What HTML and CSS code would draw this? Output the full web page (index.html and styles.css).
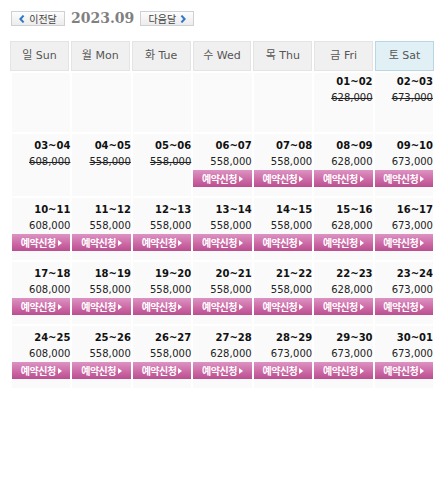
FILE: index.html
```html
<!DOCTYPE html>
<html lang="ko">
<head>
<meta charset="utf-8">
<title>2023.09</title>
<link rel="stylesheet" href="styles.css">
</head>
<body>
<div class="cal">
  <div class="nav">
    <a class="navbtn prev"><svg class="chev" viewBox="0 0 6 8" width="6" height="8"><path d="M4.6 0.6 L1.4 4 L4.6 7.4" fill="none" stroke="#2f78c4" stroke-width="2"/></svg><span>이전달</span></a>
    <span class="title">2023.09</span>
    <a class="navbtn next"><span>다음달</span><svg class="chev" viewBox="0 0 6 8" width="6" height="8"><path d="M1.4 0.6 L4.6 4 L1.4 7.4" fill="none" stroke="#2f78c4" stroke-width="2"/></svg></a>
  </div>
  <div class="week">
    <div class="wd">일 Sun</div>
    <div class="wd">월 Mon</div>
    <div class="wd">화 Tue</div>
    <div class="wd">수 Wed</div>
    <div class="wd">목 Thu</div>
    <div class="wd">금 Fri</div>
    <div class="wd sat">토 Sat</div>
  </div>
  <div class="days">
    <div class="day r1"></div>
    <div class="day r1"></div>
    <div class="day r1"></div>
    <div class="day r1"></div>
    <div class="day r1"></div>
    <div class="day r1"><div class="d">01~02</div><div class="p past">628,000</div></div>
    <div class="day r1"><div class="d">02~03</div><div class="p past">673,000</div></div>

    <div class="day"><div class="d">03~04</div><div class="p past">608,000</div></div>
    <div class="day"><div class="d">04~05</div><div class="p past">558,000</div></div>
    <div class="day"><div class="d">05~06</div><div class="p past">558,000</div></div>
    <div class="day"><div class="d">06~07</div><div class="p">558,000</div><a class="book">예약신청<i></i></a></div>
    <div class="day"><div class="d">07~08</div><div class="p">558,000</div><a class="book">예약신청<i></i></a></div>
    <div class="day"><div class="d">08~09</div><div class="p">628,000</div><a class="book">예약신청<i></i></a></div>
    <div class="day"><div class="d">09~10</div><div class="p">673,000</div><a class="book">예약신청<i></i></a></div>

    <div class="day"><div class="d">10~11</div><div class="p">608,000</div><a class="book">예약신청<i></i></a></div>
    <div class="day"><div class="d">11~12</div><div class="p">558,000</div><a class="book">예약신청<i></i></a></div>
    <div class="day"><div class="d">12~13</div><div class="p">558,000</div><a class="book">예약신청<i></i></a></div>
    <div class="day"><div class="d">13~14</div><div class="p">558,000</div><a class="book">예약신청<i></i></a></div>
    <div class="day"><div class="d">14~15</div><div class="p">558,000</div><a class="book">예약신청<i></i></a></div>
    <div class="day"><div class="d">15~16</div><div class="p">628,000</div><a class="book">예약신청<i></i></a></div>
    <div class="day"><div class="d">16~17</div><div class="p">673,000</div><a class="book">예약신청<i></i></a></div>

    <div class="day"><div class="d">17~18</div><div class="p">608,000</div><a class="book">예약신청<i></i></a></div>
    <div class="day"><div class="d">18~19</div><div class="p">558,000</div><a class="book">예약신청<i></i></a></div>
    <div class="day"><div class="d">19~20</div><div class="p">558,000</div><a class="book">예약신청<i></i></a></div>
    <div class="day"><div class="d">20~21</div><div class="p">558,000</div><a class="book">예약신청<i></i></a></div>
    <div class="day"><div class="d">21~22</div><div class="p">558,000</div><a class="book">예약신청<i></i></a></div>
    <div class="day"><div class="d">22~23</div><div class="p">628,000</div><a class="book">예약신청<i></i></a></div>
    <div class="day"><div class="d">23~24</div><div class="p">673,000</div><a class="book">예약신청<i></i></a></div>

    <div class="day"><div class="d">24~25</div><div class="p">608,000</div><a class="book">예약신청<i></i></a></div>
    <div class="day"><div class="d">25~26</div><div class="p">558,000</div><a class="book">예약신청<i></i></a></div>
    <div class="day"><div class="d">26~27</div><div class="p">558,000</div><a class="book">예약신청<i></i></a></div>
    <div class="day"><div class="d">27~28</div><div class="p">628,000</div><a class="book">예약신청<i></i></a></div>
    <div class="day"><div class="d">28~29</div><div class="p">673,000</div><a class="book">예약신청<i></i></a></div>
    <div class="day"><div class="d">29~30</div><div class="p">673,000</div><a class="book">예약신청<i></i></a></div>
    <div class="day"><div class="d">30~01</div><div class="p">673,000</div><a class="book">예약신청<i></i></a></div>
  </div>
</div>
</body>
</html>
```
FILE: styles.css
```css
html, body {
  margin: 0;
  padding: 0;
  background: #fff;
}
.cal {
  font-family: "DejaVu Sans", "Noto Sans CJK KR", sans-serif;
  width: 441px;
}
.nav {
  display: flex;
  align-items: center;
  height: 15px;
  margin-top: 11px;
  padding-left: 11px;
}
.navbtn {
  box-sizing: border-box;
  display: flex;
  align-items: center;
  justify-content: center;
  gap: 4px;
  width: 54px;
  height: 15px;
  border: 1px solid #cdd1d5;
  background: linear-gradient(#fdfdfd, #ececec);
  font-family: "Noto Sans CJK KR", sans-serif;
  font-size: 10px;
  line-height: 13px;
  color: #444;
}
.title {
  font-family: "DejaVu Serif", serif;
  font-weight: bold;
  font-size: 14px;
  color: #808080;
  margin: 0 6px;
  line-height: 15px;
}
.week {
  display: grid;
  grid-template-columns: repeat(7, 1fr);
  gap: 2px;
  margin: 15px 0 0 10px;
  width: 424px;
}
.wd {
  box-sizing: border-box;
  height: 30px;
  border: 1px solid #e4e4e4;
  background: #f0f0f0;
  text-align: center;
  font-size: 11px;
  line-height: 28px;
  color: #555;
}
.wd.sat {
  background: #e0f0f5;
  border-color: #b8d6e4;
}
.days {
  display: grid;
  grid-template-columns: repeat(7, 1fr);
  grid-auto-rows: 62px;
  grid-template-rows: 59px;
  gap: 2px;
  margin: 2px 0 0 12px;
  width: 421px;
}
.day {
  box-sizing: border-box;
  background: #fafafa;
  padding-top: 4px;
  text-align: right;
}
.day.r1 {
  padding-top: 1px;
}
.d {
  font-weight: bold;
  font-size: 10px;
  line-height: 16px;
  color: #111;
}
.p {
  font-size: 10px;
  line-height: 16px;
  color: #222;
}
.p.past {
  text-decoration: line-through;
}
.book {
  display: flex;
  align-items: center;
  justify-content: center;
  height: 17px;
  background: linear-gradient(#dc93c2, #cd6aa6 55%, #b94f8f);
  color: #fff;
  font-family: "Noto Sans CJK KR", sans-serif;
  font-weight: bold;
  font-size: 10px;
  letter-spacing: -0.5px;
  line-height: 17px;
}
.book i {
  width: 0;
  height: 0;
  margin-left: 2px;
  border-left: 4px solid #fff;
  border-top: 3.5px solid transparent;
  border-bottom: 3.5px solid transparent;
}
```
